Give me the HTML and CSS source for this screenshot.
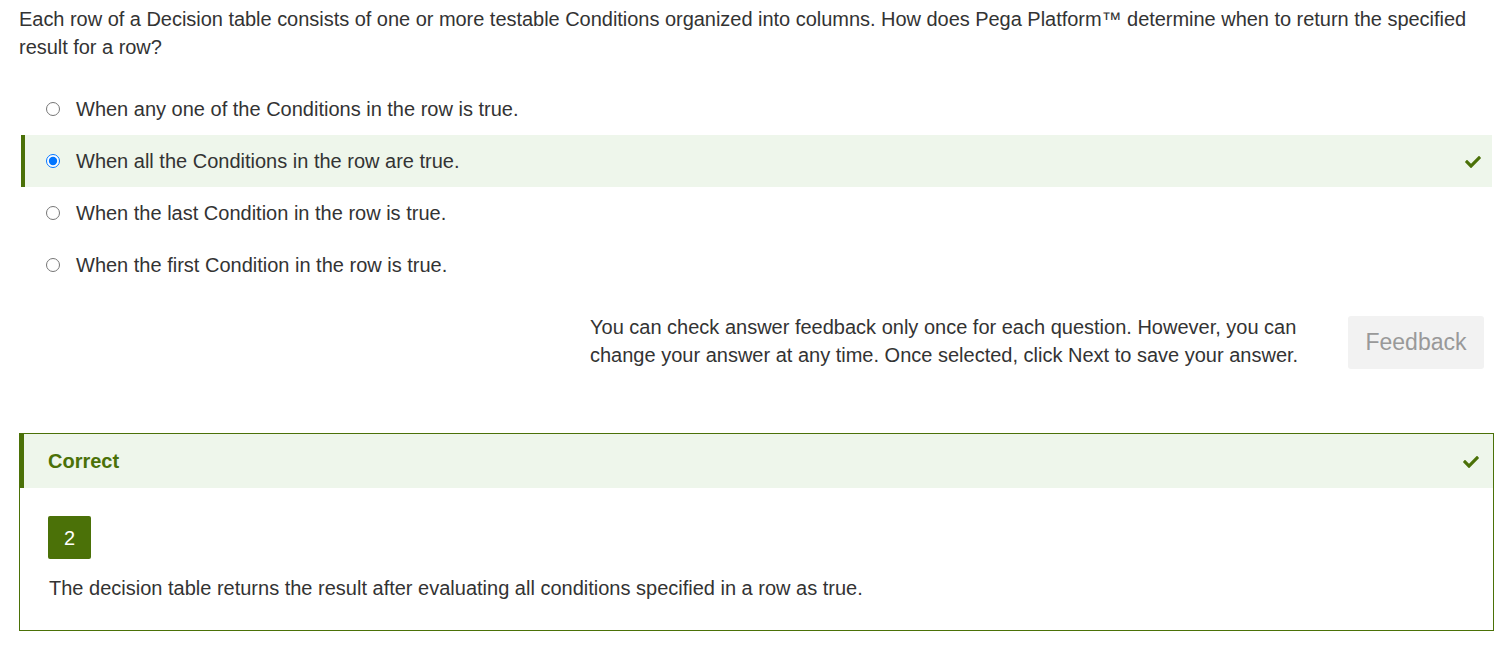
FILE: index.html
```html
<!DOCTYPE html>
<html lang="en">
<head>
<meta charset="utf-8">
<title>Question</title>
<link rel="stylesheet" href="styles.css">
</head>
<body>
<div class="page">
  <p class="question">Each row of a Decision table consists of one or more testable Conditions organized into columns. How does Pega Platform™ determine when to return the specified result for a row?</p>
  <div class="options">
    <label class="option"><input type="radio" name="q" class="radio"><span class="label">When any one of the Conditions in the row is true.</span></label>
    <label class="option selected"><input type="radio" name="q" class="radio" checked><span class="label">When all the Conditions in the row are true.</span>
      <svg class="check" viewBox="0 0 512 420" width="16" height="13"><path d="M173.9 409.4l-166.4-166.4c-10-10-10-26.2 0-36.2l36.2-36.2c10-10 26.2-10 36.2 0L192 282.7 432.1 42.6c10-10 26.2-10 36.2 0l36.2 36.2c10 10 10 26.2 0 36.2l-294.4 294.4c-10 10-26.2 10-36.2 0z" fill="#4b7108"/></svg>
    </label>
    <label class="option"><input type="radio" name="q" class="radio"><span class="label">When the last Condition in the row is true.</span></label>
    <label class="option"><input type="radio" name="q" class="radio"><span class="label">When the first Condition in the row is true.</span></label>
  </div>
  <div class="feedback-row">
    <p class="feedback-text">You can check answer feedback only once for each question. However, you can change your answer at any time. Once selected, click Next to save your answer.</p>
    <button class="feedback-btn" type="button">Feedback</button>
  </div>
  <section class="result">
    <div class="result-head">
      <span class="result-title">Correct</span>
      <svg class="check" viewBox="0 0 512 420" width="16" height="13"><path d="M173.9 409.4l-166.4-166.4c-10-10-10-26.2 0-36.2l36.2-36.2c10-10 26.2-10 36.2 0L192 282.7 432.1 42.6c10-10 26.2-10 36.2 0l36.2 36.2c10 10 10 26.2 0 36.2l-294.4 294.4c-10 10-26.2 10-36.2 0z" fill="#4b7108"/></svg>
    </div>
    <div class="result-body">
      <div class="badge">2</div>
      <p class="explanation">The decision table returns the result after evaluating all conditions specified in a row as true.</p>
    </div>
  </section>
</div>
</body>
</html>
```

FILE: styles.css
```css
* { box-sizing: border-box; }
html, body { margin: 0; padding: 0; background: #fff; }
body {
  font-family: "Liberation Sans", Arial, sans-serif;
  color: #333;
  font-size: 20px;
  line-height: 28px;
}
.page {
  padding: 5px 17px 0 19px;
}
.question {
  margin: 0;
  letter-spacing: -0.03px;
}
.options {
  margin-top: 22px;
  display: flex;
  flex-direction: column;
}
.option {
  display: flex;
  align-items: center;
  height: 52px;
  margin: 0 2px;
  border-left: 4px solid transparent;
  padding-left: 21px;
  padding-right: 11px;
  cursor: pointer;
}
.option.selected {
  background: #eef6eb;
  border-left-color: #4b7108;
}
.radio {
  width: 14px;
  height: 14px;
  margin: 0 16px 0 0;
  flex: none;
}
.label { flex: 1; }
.check { flex: none; display: block; }
.feedback-row {
  margin-top: 22px;
  display: flex;
  justify-content: flex-end;
  align-items: flex-start;
  gap: 28px;
  padding-right: 10px;
}
.feedback-text {
  margin: 0;
  width: 730px;
}
.feedback-btn {
  margin-top: 3px;
  width: 136px;
  height: 53px;
  border: none;
  border-radius: 3px;
  background: #f2f2f2;
  color: #999;
  font-family: "Liberation Sans", Arial, sans-serif;
  font-size: 23px;
  padding: 0;
}
.result {
  margin-top: 64px;
  border: 1px solid #4b7108;
}
.result-head {
  height: 54px;
  background: #eef6eb;
  border-left: 4px solid #4b7108;
  display: flex;
  align-items: center;
  justify-content: space-between;
  padding: 0 14px 0 24px;
}
.result-title {
  font-weight: bold;
  color: #4b7108;
}
.result-body {
  padding: 28px 20px 28px 28px;
}
.badge {
  width: 43px;
  height: 43px;
  background: #4b7108;
  color: #fff;
  border-radius: 2px;
  display: flex;
  align-items: center;
  justify-content: center;
  font-size: 20px;
}
.explanation {
  margin: 15px 0 0 1px;
}
```
